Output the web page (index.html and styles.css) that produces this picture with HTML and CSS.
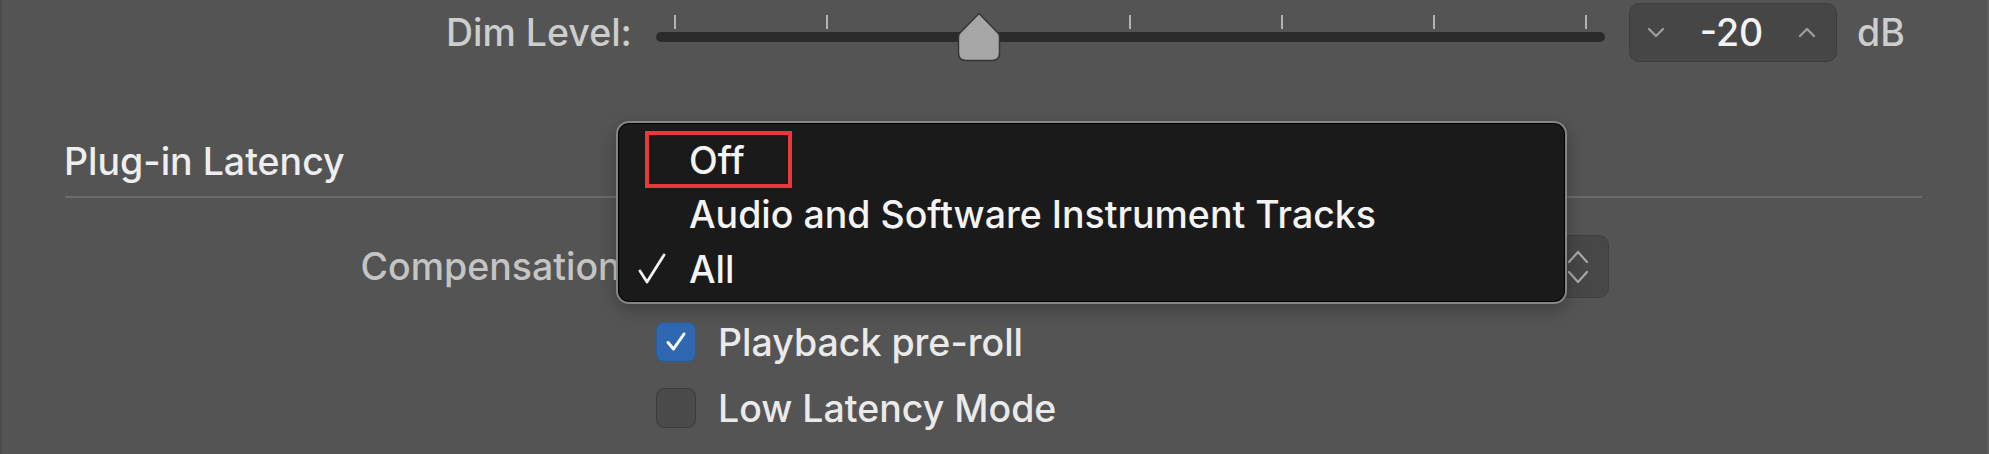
FILE: index.html
```html
<!DOCTYPE html>
<html>
<head>
<meta charset="utf-8">
<link rel="stylesheet" href="styles.css">
</head>
<body>
<div class="pane">
  <div class="row row-dim">
    <div class="label">Dim Level:</div>
    <div class="slider">
      <div class="ticks">
        <span class="tick"></span><span class="tick"></span><span class="tick"></span><span class="tick"></span><span class="tick"></span><span class="tick"></span><span class="tick"></span>
      </div>
      <div class="track"></div>
      <svg class="knob" width="44" height="50" viewBox="0 0 44 50">
        <path d="M22 1.5 L41 21 Q42.5 22.5 42.5 25 V41 Q42.5 48.5 35 48.5 H9 Q1.5 48.5 1.5 41 V25 Q1.5 22.5 3 21 Z" fill="#a6a6a6" stroke="#363636" stroke-width="1.5"/>
      </svg>
    </div>
    <div class="stepper">
      <svg class="chev" width="18" height="11" viewBox="0 0 18 11"><polyline points="2,2 9,9 16,2" fill="none" stroke="#9c9c9c" stroke-width="2.4" stroke-linecap="round" stroke-linejoin="round"/></svg>
      <span class="value">-20</span>
      <svg class="chev" width="18" height="11" viewBox="0 0 18 11"><polyline points="2,9 9,2 16,9" fill="none" stroke="#9c9c9c" stroke-width="2.4" stroke-linecap="round" stroke-linejoin="round"/></svg>
    </div>
    <div class="unit">dB</div>
  </div>

  <div class="section-title">Plug-in Latency</div>
  <div class="divider"></div>

  <div class="row row-comp">
    <div class="label label-dim">Compensation:</div>
    <div class="popup">
      <svg class="updown" width="24" height="38" viewBox="0 0 24 38"><polyline points="3,14 12,4 21,14" fill="none" stroke="#a8a8a8" stroke-width="2.2" stroke-linecap="round" stroke-linejoin="round"/><polyline points="3,24 12,34 21,24" fill="none" stroke="#a8a8a8" stroke-width="2.2" stroke-linecap="round" stroke-linejoin="round"/></svg>
    </div>
  </div>

  <div class="checks">
    <label class="check-row">
      <span class="box checked">
        <svg width="26" height="26" viewBox="0 0 26 26"><polyline points="5,13.5 10.5,20 21,5" fill="none" stroke="#fff" stroke-width="3" stroke-linecap="round" stroke-linejoin="round"/></svg>
      </span>
      <span class="check-label">Playback pre-roll</span>
    </label>
    <label class="check-row">
      <span class="box"></span>
      <span class="check-label">Low Latency Mode</span>
    </label>
  </div>

  <div class="menu">
    <div class="menu-item"><span class="mark"></span><span class="menu-text">Off</span></div>
    <div class="menu-item"><span class="mark"></span><span class="menu-text">Audio and Software Instrument Tracks</span></div>
    <div class="menu-item"><span class="mark"><svg width="28" height="32" viewBox="0 0 28 32"><polyline points="2,18 9,29 26,2" fill="none" stroke="#f2f2f2" stroke-width="2.8" stroke-linecap="round" stroke-linejoin="round"/></svg></span><span class="menu-text">All</span></div>
    <div class="annot"></div>
  </div>
</div>
</body>
</html>
```

FILE: styles.css
```css
* { box-sizing: border-box; }
html, body { margin: 0; padding: 0; }
body {
  background: #535353;
  font-family: "Inter", "Liberation Sans", sans-serif;
  font-size: 37.5px;
  font-weight: 500;
  color: #ececec;
}
.pane {
  position: relative;
  width: 1989px;
  height: 454px;
  overflow: hidden;
  background: #545454;
  border-left: 2px solid #4c4c4c;
  border-right: 2px solid #5e5e5e;
}
.row {
  display: flex;
  align-items: center;
}
.label {
  width: 630px;
  text-align: right;
  color: #cdcdcd;
  flex: none;
  white-space: nowrap;
}
.row-dim {
  height: 64px;
}
.slider {
  position: relative;
  margin-left: 24px;
  width: 949px;
  height: 64px;
  flex: none;
}
.ticks {
  display: flex;
  justify-content: space-between;
  padding: 15px 18px 0 18px;
  height: 29px;
}
.tick {
  width: 2px;
  height: 14px;
  background: #b4b4b4;
}
.track {
  margin-top: 3px;
  height: 10px;
  border-radius: 5px;
  background: #2b2b2b;
}
.knob {
  position: absolute;
  left: 301px;
  top: 12px;
}
.stepper {
  margin-left: 24px;
  margin-top: 1px;
  width: 208px;
  height: 59px;
  flex: none;
  display: flex;
  align-items: center;
  justify-content: space-between;
  padding: 0 20px 0 17px;
  background: #464646;
  border: 1px solid #3d3d3d;
  border-radius: 10px;
}
.value {
  color: #f2f2f2;
}
.unit {
  margin-left: 20px;
  color: #cdcdcd;
}
.section-title {
  margin: 74px 0 0 62px;
  height: 48px;
  line-height: 48px;
  color: #eeeeee;
}
.divider {
  margin: 10px 65px 0 63px;
  height: 2px;
  background: #6b6b6b;
}
.row-comp {
  margin-top: 37px;
  height: 63px;
}
.label-dim {
  color: #c4c4c4;
}
.popup {
  margin-left: 26px;
  width: 951px;
  height: 63px;
  flex: none;
  display: flex;
  align-items: center;
  justify-content: flex-end;
  padding: 0 18px 0 20px;
  background: #474747;
  border: 1px solid #3f3f3f;
  border-radius: 10px;
}
.checks {
  margin-top: 24px;
  padding-left: 654px;
  display: flex;
  flex-direction: column;
  gap: 26px;
}
.check-row {
  display: flex;
  align-items: center;
  height: 40px;
  gap: 22px;
}
.box {
  width: 40px;
  height: 40px;
  border-radius: 8px;
  background: #4b4b4b;
  border: 1.5px solid #3c3c3c;
  display: flex;
  align-items: center;
  justify-content: center;
  flex: none;
}
.box.checked {
  background: #2f68b0;
  border-color: #2a5c9c;
}
.check-label {
  color: #eaeaea;
}
.menu {
  position: absolute;
  left: 614px;
  top: 121px;
  width: 951px;
  height: 183px;
  padding: 10px 0 9px 0;
  background: #1a1a1a;
  border: 2px solid #858585;
  border-radius: 13px;
  box-shadow: inset 0 0 0 1px #000, 0 6px 18px rgba(0,0,0,0.25);
}
.menu-item {
  display: flex;
  align-items: center;
  height: 54.5px;
}
.mark {
  width: 71px;
  padding-left: 20px;
  display: flex;
  align-items: center;
  flex: none;
}
.menu-text {
  color: #f4f4f4;
}
.annot {
  position: absolute;
  left: 27px;
  top: 8px;
  width: 147px;
  height: 57px;
  border: 4px solid #e5393b;
}
```
